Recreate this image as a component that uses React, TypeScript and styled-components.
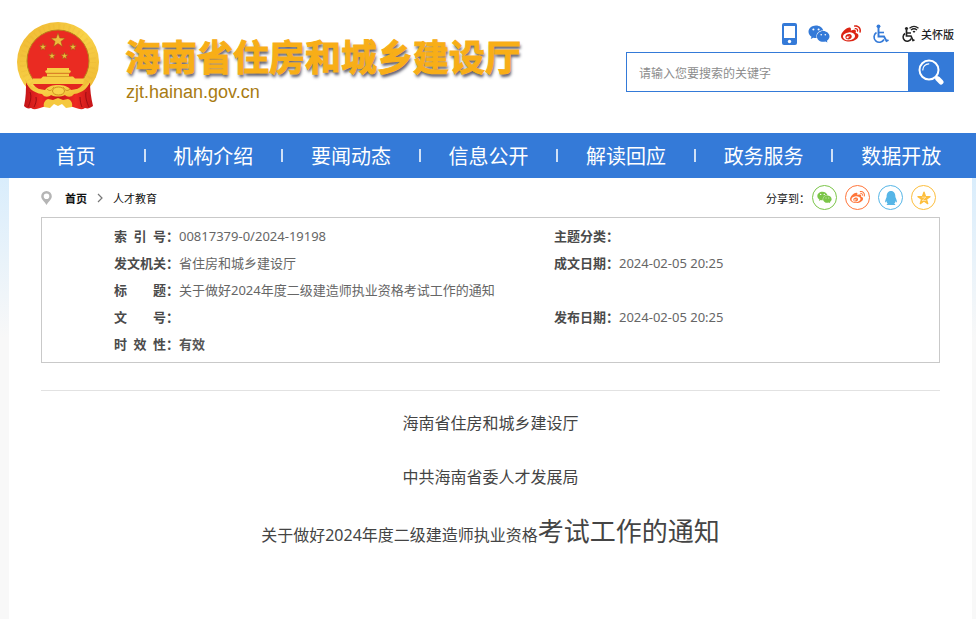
import React from 'react';
import styled, { createGlobalStyle } from 'styled-components';
import { FaWeixin, FaWeibo, FaQq } from 'react-icons/fa';

const GlobalStyle = createGlobalStyle`
  * { box-sizing: border-box; }
  body {
    margin: 0;
    background: #fff;
    color: #333;
    font-family: 'Noto Sans', 'Noto Sans CJK SC', sans-serif;
  }
  a { color: inherit; text-decoration: none; }
`;

const Page = styled.div`
  min-height: 100vh;
  display: flex;
  flex-direction: column;
`;

const Header = styled.header`
  display: flex;
  justify-content: space-between;
  height: 133px;
  padding: 0 22px 0 16px;
  background: #fff;
`;

const Brand = styled.a`
  display: flex;
  gap: 24px;
  padding-top: 21px;
`;

const BrandText = styled.div`
  display: flex;
  flex-direction: column;
  gap: 4px;
  padding-top: 12px;
`;

const SiteName = styled.h1`
  margin: 0;
  font: bold 36px/44px 'Noto Sans CJK SC', sans-serif;
  color: #f8ae17;
  white-space: nowrap;
  -webkit-text-stroke: 1px #f8ae17;
  text-shadow: 1px 3px 3px rgba(40, 40, 60, 0.75);
`;

const SiteUrl = styled.span`
  padding-left: 1px;
  font: 18px/22px 'Liberation Sans', sans-serif;
  color: #a87b12;
`;

const HeaderTools = styled.div`
  width: 328px;
  padding-top: 22px;
`;

const QuickLinks = styled.div`
  display: flex;
  align-items: center;
  justify-content: flex-end;
  gap: 11px;
  height: 24px;
  margin-bottom: 6px;
`;

const QuickLink = styled.a<{ $color: string }>`
  display: flex;
  align-items: center;
  gap: 2px;
  color: ${(p) => p.$color};
  font: 500 11px/16px 'Noto Sans CJK SC', sans-serif;
`;

const SearchForm = styled.form`
  display: flex;
  height: 40px;
`;

const SearchInput = styled.input`
  flex: 1;
  min-width: 0;
  padding: 0 12px;
  border: 1px solid #347ad8;
  border-right: 0;
  border-radius: 0;
  outline: 0;
  font: 12px 'Noto Sans CJK SC', sans-serif;
  color: #333;
  &::placeholder { color: #8c8c8c; opacity: 1; }
`;

const SearchButton = styled.button`
  display: flex;
  align-items: center;
  justify-content: center;
  width: 46px;
  padding: 0;
  border: 0;
  background: #347ad8;
  cursor: pointer;
`;

const Nav = styled.nav`
  display: grid;
  grid-template-columns: repeat(7, 1fr);
  height: 45px;
  padding: 0 5px 0 8px;
  background: #347ad8;
`;

const NavLink = styled.a`
  display: grid;
  grid-template-columns: 1fr 2px;
  align-items: center;
  color: #fff;
  font: 20px/28px 'Noto Sans CJK SC', sans-serif;
  text-align: center;
  &:not(:last-child)::after {
    content: '';
    width: 2px;
    height: 13px;
    background: #cfe0f6;
  }
`;

const Backdrop = styled.div`
  flex: 1;
  display: flex;
  padding: 0 4px 0 9px;
  background: linear-gradient(#d9edfc, #f8f8f8 160px);
`;

const Main = styled.main`
  flex: 1;
  padding: 0 32px;
  background: #fff;
`;

const TopRow = styled.div`
  display: flex;
  align-items: center;
  justify-content: space-between;
  height: 39px;
  padding-right: 4px;
  color: #111;
  font: 11px/16px 'Noto Sans CJK SC', sans-serif;
`;

const Crumbs = styled.nav`
  display: flex;
  align-items: center;
  gap: 10px;
`;

const HomeCrumb = styled.a`
  padding-left: 3px;
  font-weight: bold;
`;

const Share = styled.div`
  display: flex;
  align-items: center;
  gap: 2px;
`;

const ShareButtons = styled.div`
  display: flex;
  gap: 8px;
`;

const ShareButton = styled.button<{ $color: string }>`
  display: flex;
  align-items: center;
  justify-content: center;
  width: 25px;
  height: 25px;
  padding: 0;
  border: 1px solid ${(p) => p.$color};
  border-radius: 50%;
  background: #fff;
  color: ${(p) => p.$color};
  cursor: pointer;
`;

const InfoBox = styled.section`
  padding: 5px 0 4px 72px;
  border: 1px solid #c9c9c9;
`;

const InfoTable = styled.table`
  width: 100%;
  table-layout: fixed;
  border-collapse: collapse;
  font-size: 13px;
  line-height: 27px;
  white-space: nowrap;
`;

const LabelCol = styled.col`
  width: 65px;
`;

const ValueCol = styled.col`
  width: 375px;
`;

const InfoLabel = styled.th`
  padding: 0;
  height: 27px;
  color: #4a4a4a;
  text-align: left;
  vertical-align: top;
`;

const Spread = styled.span`
  display: inline-block;
  width: 52px;
  vertical-align: top;
  text-align-last: justify;
`;

const InfoValue = styled.td<{ $strong?: boolean }>`
  padding: 0;
  height: 27px;
  color: ${(p) => (p.$strong ? '#555' : '#666')};
  font-weight: ${(p) => (p.$strong ? 'bold' : 'normal')};
  vertical-align: top;
`;

const Article = styled.article`
  margin-top: 27px;
  padding-top: 5px;
  border-top: 1px solid #e2e2e2;
  color: #444;
  text-align: center;
`;

const Paragraph = styled.p`
  margin: 0;
  font-size: 16px;
  line-height: 54px;
`;

const Large = styled.span`
  font-size: 26px;
`;

const star = (cx: number, cy: number, r: number) =>
  Array.from({ length: 10 }, (_, i) => {
    const a = (Math.PI / 5) * i - Math.PI / 2;
    const d = i % 2 ? r * 0.4 : r;
    return `${(cx + d * Math.cos(a)).toFixed(1)},${(cy + d * Math.sin(a)).toFixed(1)}`;
  }).join(' ');

const Emblem = () => (
  <svg width="85" height="90" viewBox="0 0 85 90" aria-hidden="true">
    <defs>
      <linearGradient id="gold" x1="0" y1="0" x2="1" y2="1">
        <stop offset="0" stopColor="#eeb42f" />
        <stop offset=".5" stopColor="#f8d248" />
        <stop offset="1" stopColor="#edb32e" />
      </linearGradient>
      <linearGradient id="drape" x1="0" y1="0" x2="1" y2="0">
        <stop offset="0" stopColor="#c41418" />
        <stop offset=".25" stopColor="#ee2a22" />
        <stop offset=".5" stopColor="#c91519" />
        <stop offset=".75" stopColor="#ee2a22" />
        <stop offset="1" stopColor="#c41418" />
      </linearGradient>
    </defs>
    <ellipse cx="42" cy="41" rx="41" ry="40" fill="url(#gold)" />
    <circle cx="42" cy="41" r="35" fill="none" stroke="#d79a20" strokeWidth="6" strokeDasharray="1 4 2 3" opacity=".12" />
    <circle cx="42" cy="40" r="31" fill="#ea2b22" stroke="#b9811c" strokeWidth="1" />
    <g fill="#eebc3c" stroke="#9a5a15" strokeWidth=".5">
      <polygon points={star(42, 19.5, 7.5)} />
      <polygon points={star(27, 26, 3.8)} />
      <polygon points={star(57, 26, 3.8)} />
      <polygon points={star(36, 35, 3.8)} />
      <polygon points={star(48.5, 35, 3.8)} />
    </g>
    <g fill="#f7cd45">
      <path d="M31 47h22v2l2 1-1 2H30l-1-2 2-1zM31 52.500h22V56H31z" />
      <path d="M27 55.500h30l2 2h9l-1 6H17v-6h8z" />
    </g>
    <path d="M30 52.200h24M30 55.500h25" stroke="#c98a20" strokeWidth=".7" />
    <path d="M10 61c3 6 12 10 22 10h21c10 0 18-4 21-10 0 7 1 16 3 24-3 2-5 3-8 2-3 2-6 1-9 0l-18-6-18 6c-3 1-6 2-9 0-3 1-5 0-7-2 2-8 2-17 2-24z" fill="url(#drape)" />
    <path d="M17 63h50c-3 4-7 6-11 7H28c-4-1-8-3-11-7z" fill="#e3261f" />
    <path d="M9 58c4 8 12 10 20 11 3-4 8-5 13-5s10 1 13 5c8-1 16-3 20-11-2 8-8 14-17 15-3 4-7 3-9 1-4 2-10 2-14 0-2 2-6 3-9-1-9-1-15-7-17-15z" fill="url(#gold)" />
    <path d="M28 86c-1-4 1-7 4-8l5 1 5-2 5 2 5-1c3 1 5 4 4 8l-6 1-4-4-4 2-4-2-4 4z" fill="#f5c83e" />
    <path d="M31 68c3 3 5 1 7-2M54 68c-3 3-5 1-7-2" fill="none" stroke="#d1901f" strokeWidth="1" />
    <ellipse cx="42.500" cy="70" rx="6" ry="4" fill="#f9d34a" stroke="#cf8f20" strokeWidth="1" />
    <path d="M14 71c2 5 0 11-2 15M20 76c1 4-1 8-2 10M70 71c-1 5 1 11 3 15M64 76c0 4 1 8 2 10" fill="none" stroke="#9c0d12" strokeWidth="1" />
  </svg>
);

const PhoneIcon = () => (
  <svg width="15" height="22" viewBox="0 0 15 22" aria-hidden="true">
    <rect width="15" height="22" rx="2" fill="#347ad8" />
    <path d="M2 3h11v12H2z" fill="#fff" />
    <circle cx="7.500" cy="18.500" r="1.700" fill="#fff" />
  </svg>
);

const WheelchairIcon = () => (
  <svg width="18" height="20" viewBox="0 0 18 20" fill="none" stroke="currentColor" aria-hidden="true">
    <circle cx="6.500" cy="2.300" r="1.900" fill="currentColor" stroke="none" />
    <path d="M6.500 4v8.500h5.500l2.500 4.500 2-1" strokeWidth="1.900" />
    <path d="M7 8.500h5" strokeWidth="1.600" />
    <path d="M4.500 8.500A5.300 5.300 0 1 0 12 15.500" strokeWidth="1.600" />
  </svg>
);

const CareIcon = () => (
  <svg width="18" height="18" viewBox="0 0 18 18" fill="none" stroke="currentColor" aria-hidden="true">
    <circle cx="5.500" cy="3.500" r="1.600" fill="currentColor" stroke="none" />
    <path d="M5.500 5v6h4.500l2 4.500 1.500-.5M6 8h4" strokeWidth="1.700" />
    <path d="M4 8.500a4.200 4.200 0 1 0 6.200 5" strokeWidth="1.500" />
    <path d="M8.500 3.200q4.500-3.800 9 0M10 5q3-2.600 6 0" strokeWidth="1.300" />
    <path d="M11.500 6.200q1.500-1 3 0L13 8z" fill="currentColor" stroke="none" />
  </svg>
);

const SearchIcon = () => (
  <svg width="26" height="26" viewBox="0 0 26 26" fill="none" stroke="#fff" aria-hidden="true">
    <circle cx="11" cy="11" r="9.500" strokeWidth="2" />
    <path d="M4.800 11a6.200 6.200 0 0 1 6-6.200" strokeWidth="1.200" strokeLinecap="round" />
    <path d="M17.500 17.500l2 2" strokeWidth="3" />
    <path d="M19.800 19.800l3.200 3.200" strokeWidth="5" strokeLinecap="round" />
  </svg>
);

const PinIcon = () => (
  <svg width="11" height="14" viewBox="0 0 11 14" aria-hidden="true">
    <path fillRule="evenodd" d="M5.500 0A5.300 5.300 0 0 0 .2 5.300C.2 8.500 3.500 10.500 5.500 14c2-3.500 5.300-5.500 5.300-8.700A5.300 5.300 0 0 0 5.500 0zm0 2.500a2.800 2.800 0 1 1 0 5.600 2.800 2.800 0 0 1 0-5.600z" fill="#b5b5b5" />
  </svg>
);

const ChevronIcon = () => (
  <svg width="6" height="10" viewBox="0 0 6 10" fill="none" stroke="#777" aria-hidden="true">
    <path d="M1 1l4 4-4 4" strokeWidth="1.200" />
  </svg>
);

const QzoneIcon = () => (
  <svg width="14" height="14" viewBox="0 0 14 14" aria-hidden="true">
    <polygon points={star(7, 7.5, 6.3)} fill="currentColor" stroke="currentColor" strokeWidth="1.400" strokeLinejoin="round" />
    <path d="M4.800 6.200h4l-3.600 3.300h4" fill="none" stroke="#fff" strokeWidth=".5" />
  </svg>
);

const navItems = ['首页', '机构介绍', '要闻动态', '信息公开', '解读回应', '政务服务', '数据开放'];

const Label = ({ children }: { children: string }) => (
  <InfoLabel scope="row">
    <Spread>{children}</Spread>：
  </InfoLabel>
);

export default function App() {
  return (
    <Page>
      <GlobalStyle />
      <Header>
        <Brand href="#">
          <Emblem />
          <BrandText>
            <SiteName>海南省住房和城乡建设厅</SiteName>
            <SiteUrl>zjt.hainan.gov.cn</SiteUrl>
          </BrandText>
        </Brand>
        <HeaderTools>
          <QuickLinks>
            <QuickLink href="#" $color="#347ad8" aria-label="手机版"><PhoneIcon /></QuickLink>
            <QuickLink href="#" $color="#347ad8" aria-label="微信"><FaWeixin size={22} /></QuickLink>
            <QuickLink href="#" $color="#dc2413" aria-label="微博"><FaWeibo size={20} /></QuickLink>
            <QuickLink href="#" $color="#347ad8" aria-label="无障碍"><WheelchairIcon /></QuickLink>
            <QuickLink href="#" $color="#222"><CareIcon />关怀版</QuickLink>
          </QuickLinks>
          <SearchForm role="search" onSubmit={(e) => e.preventDefault()}>
            <SearchInput type="text" placeholder="请输入您要搜索的关键字" aria-label="搜索" />
            <SearchButton type="submit" aria-label="搜索"><SearchIcon /></SearchButton>
          </SearchForm>
        </HeaderTools>
      </Header>
      <Nav>
        {navItems.map((item) => <NavLink href="#" key={item}>{item}</NavLink>)}
      </Nav>
      <Backdrop>
        <Main>
          <TopRow>
            <Crumbs>
              <PinIcon />
              <HomeCrumb href="#">首页</HomeCrumb>
              <ChevronIcon />
              <a href="#">人才教育</a>
            </Crumbs>
            <Share>
              <span>分享到：</span>
              <ShareButtons>
                <ShareButton type="button" $color="#7bc549" aria-label="微信"><FaWeixin size={15} /></ShareButton>
                <ShareButton type="button" $color="#ff763b" aria-label="微博"><FaWeibo size={15} /></ShareButton>
                <ShareButton type="button" $color="#56b6e7" aria-label="QQ"><FaQq size={14} /></ShareButton>
                <ShareButton type="button" $color="#fdbe3d" aria-label="QQ空间"><QzoneIcon /></ShareButton>
              </ShareButtons>
            </Share>
          </TopRow>
          <InfoBox>
            <InfoTable>
              <colgroup>
                <LabelCol /><ValueCol /><LabelCol /><col />
              </colgroup>
              <tbody>
                <tr>
                  <Label>索 引 号</Label><InfoValue>00817379-0/2024-19198</InfoValue>
                  <Label>主题分类</Label><InfoValue />
                </tr>
                <tr>
                  <Label>发文机关</Label><InfoValue>省住房和城乡建设厅</InfoValue>
                  <Label>成文日期</Label><InfoValue>2024-02-05 20:25</InfoValue>
                </tr>
                <tr>
                  <Label>标 题</Label>
                  <InfoValue colSpan={3}>关于做好2024年度二级建造师执业资格考试工作的通知</InfoValue>
                </tr>
                <tr>
                  <Label>文 号</Label><InfoValue />
                  <Label>发布日期</Label><InfoValue>2024-02-05 20:25</InfoValue>
                </tr>
                <tr>
                  <Label>时 效 性</Label><InfoValue $strong colSpan={3}>有效</InfoValue>
                </tr>
              </tbody>
            </InfoTable>
          </InfoBox>
          <Article>
            <Paragraph>海南省住房和城乡建设厅</Paragraph>
            <Paragraph>中共海南省委人才发展局</Paragraph>
            <Paragraph>关于做好2024年度二级建造师执业资格<Large>考试工作的通知</Large></Paragraph>
          </Article>
        </Main>
      </Backdrop>
    </Page>
  );
}
